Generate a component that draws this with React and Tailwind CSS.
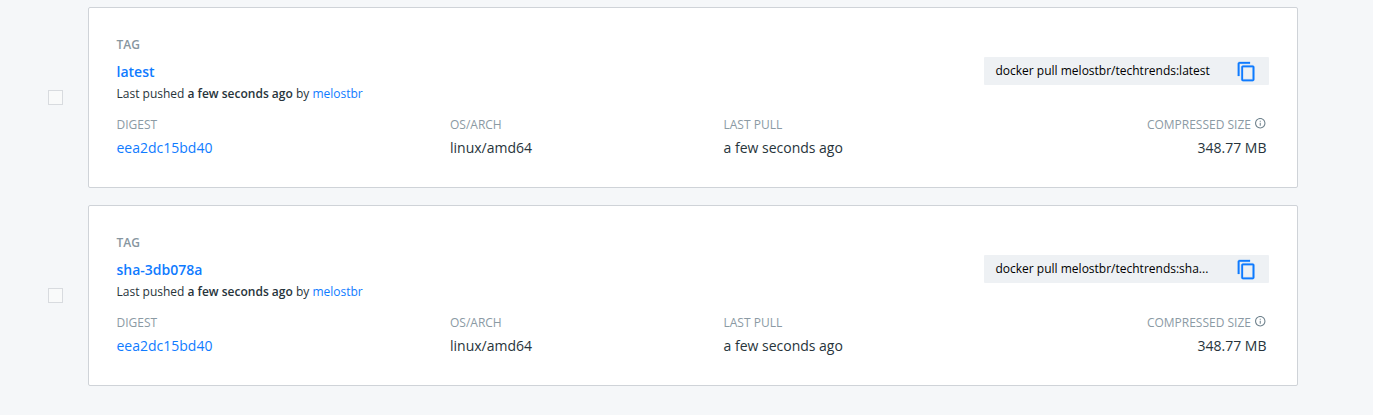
const tags = [
  { name: 'latest', command: 'docker pull melostbr/techtrends:latest' },
  { name: 'sha-3db078a', command: 'docker pull melostbr/techtrends:sha...' },
];

function CopyIcon() {
  return (
    <svg className="mt-px size-[21px] fill-[#0f7bff] stroke-[#0f7bff] stroke-[0.3]" viewBox="0 0 24 24">
      <path d="M16 1H4c-1.1 0-2 .9-2 2v14h2V3h12V1zm3 4H8c-1.1 0-2 .9-2 2v14c0 1.1.9 2 2 2h11c1.1 0 2-.9 2-2V7c0-1.1-.9-2-2-2zm0 16H8V7h11v14z" />
    </svg>
  );
}

function InfoIcon() {
  return (
    <svg className="mb-[3px] size-[12.5px] fill-[#6f828d]" viewBox="0 0 24 24">
      <path d="M11 17h2v-6h-2v6zm1-15C6.48 2 2 6.48 2 12s4.480 10 10 10 10-4.480 10-10S17.520 2 12 2zm0 18c-4.410 0-8-3.590-8-8s3.590-8 8-8 8 3.590 8 8-3.590 8-8 8zM11 9h2V7h-2v2z" />
    </svg>
  );
}

function TagCard({ tag }) {
  return (
    <div className="flex items-center">
      <div className="mr-[25px] size-[15px] border border-[#d8dbdf] bg-[#f9fafa]" />
      <div className="h-[181px] w-[1210px] rounded-xs border border-[#cfd3d8] bg-white pt-[29px] pr-7 pl-[27.5px]">
        <div className="flex justify-between">
          <div>
            <div className="text-[12px] leading-4 font-semibold text-[#8796a0]">TAG</div>
            <div className="mt-[9px] text-[14px] leading-5 font-semibold text-[#0f7bff]">{tag.name}</div>
            <div className="mt-1 text-[12px] leading-4 text-[#27343b]">
              Last pushed <span className="font-semibold">a few seconds ago</span> by <span className="text-[#0f7bff]">melostbr</span>
            </div>
          </div>
          <div className="mt-5 flex h-7 w-[285px] items-center justify-between rounded-[1px] bg-[#eef1f4] pr-3 pl-[11.5px] text-[12px] text-black">
            <span>{tag.command}</span>
            <CopyIcon />
          </div>
        </div>
        <div className="mt-[15px] flex text-[14px] leading-5 text-[#27343b]">
          <div className="w-[333.5px]">
            <div className="text-[12px] leading-4 text-[#8b9aa4]">DIGEST</div>
            <div className="mt-[5px] text-[#0f7bff]">eea2dc15bd40</div>
          </div>
          <div className="w-[273.5px]">
            <div className="text-[12px] leading-4 text-[#8b9aa4]">OS/ARCH</div>
            <div className="mt-[5px]">linux/amd64</div>
          </div>
          <div>
            <div className="text-[12px] leading-4 text-[#8b9aa4]">LAST PULL</div>
            <div className="mt-[5px]">a few seconds ago</div>
          </div>
          <div className="ml-auto pr-[2.5px] text-right">
            <div className="flex h-4 items-center justify-end gap-[3px] text-[12px] leading-4 text-[#8b9aa4]">
              COMPRESSED SIZE <InfoIcon />
            </div>
            <div className="mt-[5px]">348.77 MB</div>
          </div>
        </div>
      </div>
    </div>
  );
}

export default function App() {
  return (
    <main className="flex h-[415px] w-[1373px] flex-col gap-[17px] overflow-hidden bg-[#f5f7f9] pt-[7px] pl-12 font-['Open_Sans',sans-serif]">
      {tags.map((tag) => <TagCard key={tag.name} tag={tag} />)}
    </main>
  );
}
